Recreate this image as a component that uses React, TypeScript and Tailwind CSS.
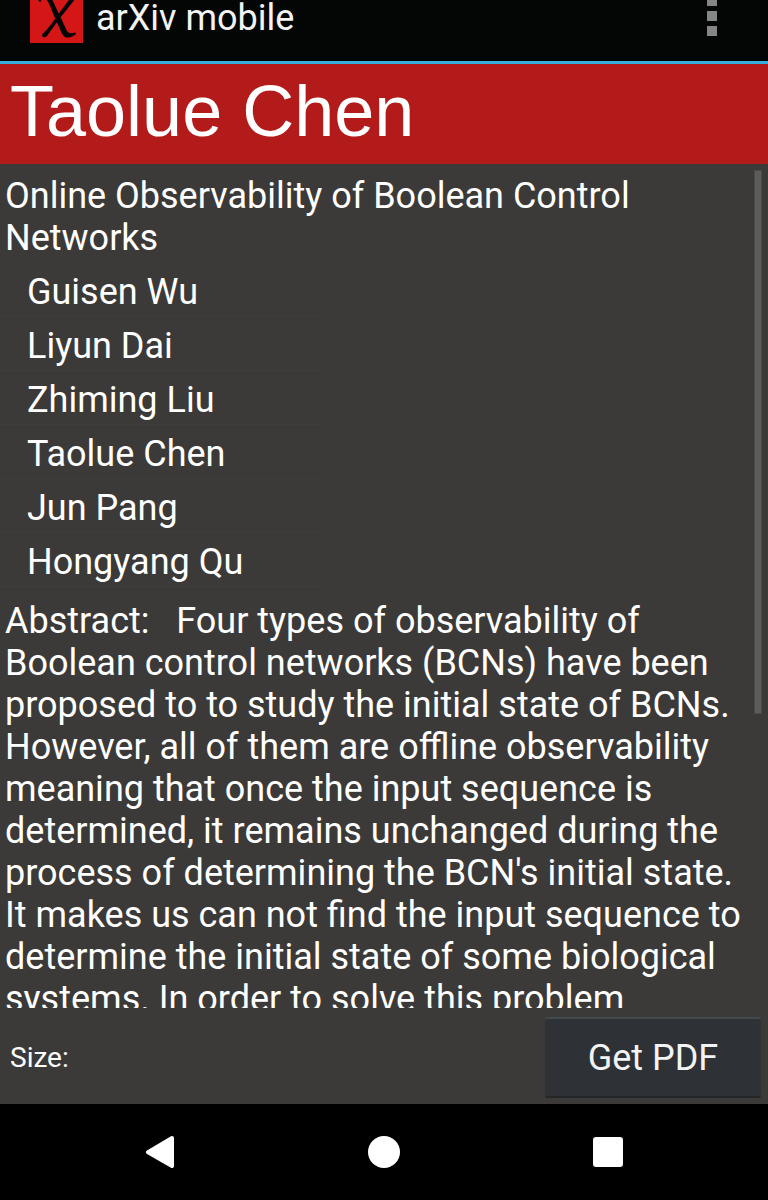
const authors = ['Guisen Wu', 'Liyun Dai', 'Zhiming Liu', 'Taolue Chen', 'Jun Pang', 'Hongyang Qu'];

function Logo() {
  return (
    <svg viewBox="0 0 53 53" className="h-[53px] w-[53px] shrink-0" aria-hidden="true">
      <rect width="53" height="53" fill="#d41617" />
      <path
        d="M8.500 11C10 4 18 2 20.500 6C23 11 26.500 19 30.500 27L36 39C37.500 43 40 44 45.500 42.500L46 44C43 46.500 40 48 37 47.500C33 47 31.500 43 29.500 38L24.500 27C20 16 18 9 14 8C12 8 11.500 10 10.500 12Z"
        fill="#050505"
      />
      <path
        d="M43 5C46 3 48 5 46 8L30 28C25 35 21 40 17 46C15 48 12 47.500 12 45C13 43 19 38 23.500 31C30 22 37 12 43 5Z"
        fill="#050505"
      />
    </svg>
  );
}

function AppBar() {
  return (
    <header className="flex h-16 shrink-0 items-end justify-between border-b-3 border-[#38b0de] bg-[#040505] pr-[51px] pl-[30px]">
      <div className="flex items-end gap-[13px] pb-[18px]">
        <Logo />
        <span className="pb-1 text-[36px] leading-[42px] text-[#f3f3f3]">arXiv mobile</span>
      </div>
      <button type="button" aria-label="More options" className="flex flex-col gap-[5px] pb-[25px]">
        <span className="size-[10px] bg-[#858585]" />
        <span className="size-[10px] bg-[#858585]" />
        <span className="size-[10px] bg-[#858585]" />
      </button>
    </header>
  );
}

function NavigationBar() {
  return (
    <nav className="h-24 shrink-0 bg-black">
      <div className="mx-auto grid h-full max-w-[672px] grid-cols-3">
        <button type="button" aria-label="Back" className="flex items-center justify-center">
          <svg viewBox="0 0 28 32" className="h-8 w-7">
            <path d="M26 2L2 16.300L26 30Z" fill="white" stroke="white" strokeWidth="4" strokeLinejoin="round" />
          </svg>
        </button>
        <button type="button" aria-label="Home" className="flex items-center justify-center">
          <span className="size-8 rounded-full bg-white" />
        </button>
        <button type="button" aria-label="Recent apps" className="flex items-center justify-center">
          <span className="size-[30px] rounded-[3px] bg-white" />
        </button>
      </div>
    </nav>
  );
}

export default function App() {
  return (
    <div className="flex h-screen flex-col overflow-hidden bg-[#3b3a38] font-['Roboto',sans-serif] text-white">
      <AppBar />
      <h1 className="shrink-0 bg-[#b31b1b] px-[10px] pt-[5px] pb-[11px] font-['Liberation_Sans',Arial,sans-serif] text-[72px] leading-[84px]">
        Taolue Chen
      </h1>
      <main className="relative min-h-0 flex-1 overflow-hidden">
        <div className="px-[5px] pt-[11px] text-[36px] leading-[42px]">
          <h2>Online Observability of Boolean Control Networks</h2>
          <ul className="-ml-[5px] max-w-80 pt-1 pb-[13px]">
            {authors.map((name) => (
              <li key={name} className="border-b border-[#3e3e3c]">
                <a href="#author" className="block pt-2 pr-1 pb-[3px] pl-[27px]">
                  {name}
                </a>
              </li>
            ))}
          </ul>
          <p>
            Abstract: &nbsp; Four types of observability of Boolean control networks (BCNs) have been proposed to to
            study the initial state of BCNs. However, all of them are offline observability meaning that once the input
            sequence is determined, it remains unchanged during the process of determining the BCN's initial state. It
            makes us can not find the input sequence to determine the initial state of some biological systems. In order
            to solve this problem
          </p>
        </div>
        <div className="absolute top-[6px] right-[6px] h-[64.4%] w-2 border border-[#4a4a49] bg-[#5c5c5c]" />
      </main>
      <footer className="flex h-24 shrink-0 items-center justify-between pt-[3px] pr-[7px] pl-[10px]">
        <span className="text-[28px] leading-8">Size:</span>
        <button
          type="button"
          className="h-[81px] w-[216px] rounded-[3px] border-t-2 border-b-2 border-t-[#434a4e] border-b-[#232527] bg-[#2e3135] text-[36px] leading-[42px] text-[#f3f3f3]"
        >
          Get PDF
        </button>
      </footer>
      <NavigationBar />
    </div>
  );
}
